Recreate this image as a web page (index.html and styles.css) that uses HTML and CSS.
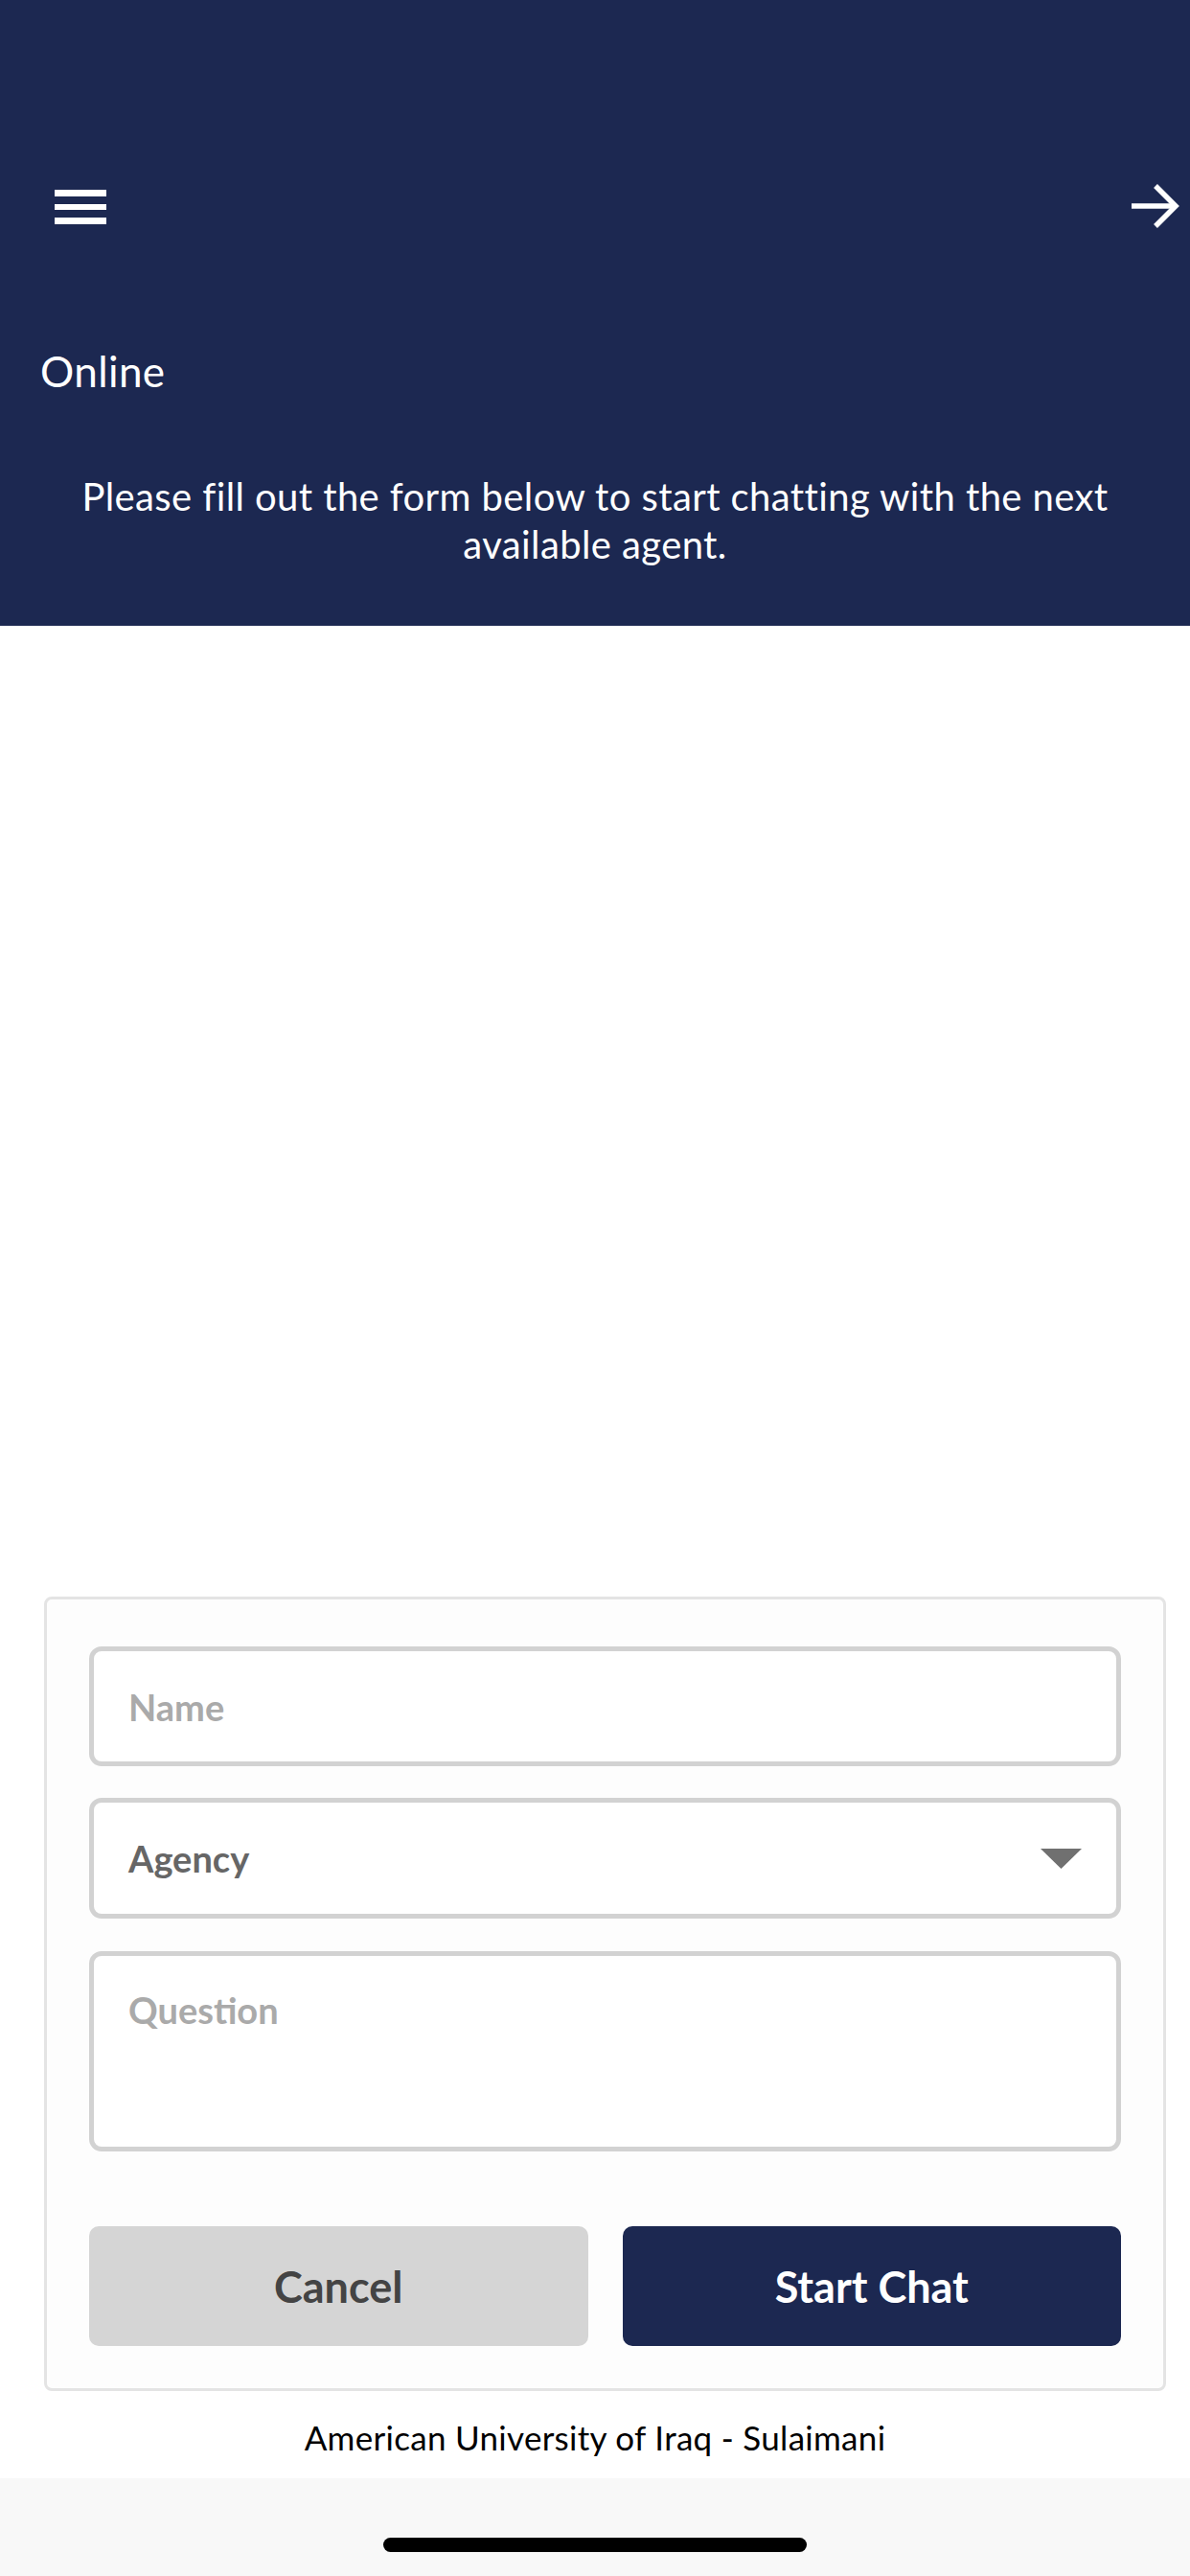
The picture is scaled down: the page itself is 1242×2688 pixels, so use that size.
FILE: index.html
```html
<!DOCTYPE html>
<html lang="en">
<head>
    <meta charset="UTF-8">
    <meta name="viewport" content="width=device-width, initial-scale=1.0">
    <title>Chat</title>
    <link rel="stylesheet" href="styles.css">
</head>
<body>
    <div id="header">
        <div class="top-bar">
            <span class="menu-btn">
                <i></i><i></i><i></i>
            </span>
            <svg class="go-btn" width="52" height="50" viewBox="0 0 52 50">
                <path d="M0 24H45" stroke="#fff" stroke-width="5.5" fill="none"/>
                <path d="M25 3L46 24L25 45" stroke="#fff" stroke-width="5.5" fill="none"/>
            </svg>
        </div>
        <div class="status">Online</div>
        <p class="intro">Please fill out the form below to start chatting with the next available agent.</p>
    </div>

    <div id="main">
        <form class="chat-form">
            <input class="field" type="text" placeholder="Name">
            <div class="field select">
                <span>Agency</span>
                <svg width="43" height="21" viewBox="0 0 43 21"><path d="M0 0H43L21.5 21Z" fill="#707070"/></svg>
            </div>
            <textarea class="field area" placeholder="Question"></textarea>
            <div class="btn-row">
                <button type="button" class="btn cancel">Cancel</button>
                <button type="button" class="btn start">Start Chat</button>
            </div>
        </form>
        <p class="footer-text">American University of Iraq - Sulaimani</p>
    </div>

    <div id="home-bar">
        <span></span>
    </div>
</body>
</html>
```

FILE: styles.css
```css
*{
    margin: 0;
    padding: 0;
    box-sizing: border-box;
}
body{
    width: 1242px;
    height: 2688px;
    display: flex;
    flex-direction: column;
    font-family: Lato, "Open Sans", sans-serif;
    background: #fff;
}
#header{
    height: 653px;
    background: #1c2851;
    color: #fff;
    padding-top: 192px;
}
.top-bar{
    height: 48px;
    display: flex;
    justify-content: space-between;
    align-items: center;
    padding: 0 9px 0 57px;
}
.menu-btn{
    width: 54px;
    display: flex;
    flex-direction: column;
    gap: 8px;
}
.menu-btn i{
    display: block;
    height: 6.5px;
    background: #fff;
}
.status{
    margin-top: 121px;
    padding-left: 42px;
    font-size: 44px;
    line-height: 53px;
    letter-spacing: 0.4px;
}
.intro{
    margin-top: 79px;
    padding: 0 60px;
    text-align: center;
    font-size: 40px;
    line-height: 50px;
    letter-spacing: 0.4px;
}
#main{
    flex: 1;
    display: flex;
    flex-direction: column;
    justify-content: flex-end;
}
.chat-form{
    width: 1171px;
    margin-left: 46px;
    border: 3px solid #e4e4e4;
    border-radius: 8px;
    background: #fdfdfd;
    padding: 49px 44px 44px;
    display: flex;
    flex-direction: column;
}
.field{
    display: block;
    width: 100%;
    height: 125px;
    border: 5px solid #d2d2d2;
    border-radius: 13px;
    background: #fff;
    padding: 0 36px;
    font-family: Lato, sans-serif;
    font-weight: bold;
    font-size: 38px;
    color: #666;
    outline: none;
}
.field::placeholder{
    color: #aaa;
}
.select{
    margin-top: 33px;
    height: 126px;
    display: flex;
    align-items: center;
    justify-content: space-between;
    padding-right: 36px;
}
.area{
    margin-top: 34px;
    height: 209px;
    padding-top: 34px;
    line-height: 1.2;
    resize: none;
}
.btn-row{
    margin-top: 78px;
    display: flex;
    gap: 36px;
}
.btn{
    flex: 1;
    height: 125px;
    border: none;
    border-radius: 10px;
    font-family: Lato, sans-serif;
    font-weight: bold;
    font-size: 45px;
}
.cancel{
    background: #d5d5d5;
    color: #444;
}
.start{
    background: #1c2851;
    color: #fff;
}
.footer-text{
    margin: 27px 0 22px;
    text-align: center;
    font-size: 35px;
    line-height: 42px;
    letter-spacing: 0.3px;
    color: #000;
}
#home-bar{
    height: 102px;
    background: #f8f8f8;
    padding-top: 62px;
}
#home-bar span{
    display: block;
    width: 442px;
    height: 15px;
    margin: 0 auto;
    background: #000;
    border-radius: 8px;
}
```
